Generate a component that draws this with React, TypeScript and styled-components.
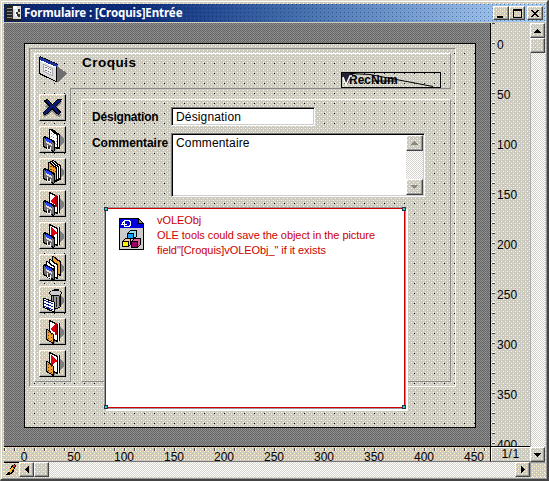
import React from "react";
import styled, { createGlobalStyle, css } from "styled-components";

/* One-pixel dots repeated on a square step, used for dithered fills. */
const dot = (color: string, x: number, y: number, step: number) =>
  `conic-gradient(at 1px 1px, transparent 75%, ${color} 0) ${x}px ${y}px / ${step}px ${step}px`;

const face = [
  dot("#ffffcc", 0, 0, 4),
  dot("#ffffcc", 2, 2, 4),
  dot("#f6cccc", 2, 0, 4),
  "#ccc9be",
].join(", ");
const checker = (a: string, b: string) =>
  `${dot(a, 0, 0, 2)}, ${dot(a, 1, 1, 2)}, ${b}`;

const Global = createGlobalStyle`
  html, body { margin: 0; padding: 0; overflow: hidden; }
  * { box-sizing: border-box; }
  svg { display: block; }
`;

const Window = styled.div`
  width: 549px;
  height: 481px;
  padding: 3px 2px 2px 3px;
  border: 1px solid #dedbc8;
  border-right: 2px solid #444;
  border-bottom: 2px solid #444;
  background: ${face};
  box-shadow: inset 1px 1px #fff, inset -1px -1px #999;
  font-family: "Liberation Sans", Arial, sans-serif;
  color: #000;
  overflow: hidden;
`;

const TitleBar = styled.header`
  display: flex;
  align-items: center;
  width: 541px;
  height: 18px;
  margin-bottom: 1px;
  padding: 0 2px;
  background: ${dot("#00336680", 0, 0, 4)}, ${dot("#6666cc55", 2, 2, 4)},
    linear-gradient(90deg, #0a246a 0%, #0a2a78 25%, #3f6aa8 52%, #a6caf0 95%);
`;

const TitleText = styled.h1`
  flex: 1;
  margin: 0 0 0 2px;
  color: #fff;
  font: bold 11.5px/18px "Noto Sans", sans-serif;
  letter-spacing: -0.08px;
  white-space: nowrap;
`;

const raised = css`
  background: ${face};
  border: 1px solid;
  border-color: #fff #444 #444 #fff;
  box-shadow: inset -1px -1px #999;
`;

const CaptionButton = styled.button<{ $gap?: number }>`
  ${raised}
  display: grid;
  place-items: center;
  width: 16px;
  height: 14px;
  margin: 0 0 0 ${(p) => p.$gap ?? 0}px;
  padding: 0;
`;

const Body = styled.div`
  display: grid;
  grid-template-columns: 486px 40px 15px;
  grid-template-rows: 423px 16px 15px;
`;

const Canvas = styled.main`
  padding: 20px 0 0 20px;
  background: ${dot("#a2a2a2", 1, 1, 4)}, ${checker("#8c8c8c", "#666")};
`;

const Page = styled.div`
  position: relative;
  width: 452px;
  height: 385px;
  padding: 4px;
  border: 1px solid #000;
  background: ${dot("#000", 9, 9, 10)}, ${face};
`;

const Group = styled.section`
  width: 427px;
  height: 339px;
  padding: 4px;
  border: 1px solid;
  border-color: #888 #fff #fff #888;
`;

const FormHeader = styled.div`
  display: flex;
  width: 417px;
  height: 35px;
  padding: 0 9px 0 4px;
  border: solid;
  border-width: 1px 1px 0 1px;
  border-color: #fff #888 #888 #fff;
`;

const Heading = styled.h2`
  margin: 0 auto 0 15px;
  font-size: 13.5px;
  line-height: 17px;
  letter-spacing: 0.5px;
`;

const RecNum = styled.div`
  position: relative;
  width: 100px;
  height: 16px;
  margin-top: 18px;
  padding-left: 7px;
  border: 1px solid #000;
  font-size: 12px;
  font-weight: bold;
  line-height: 14px;

  svg {
    position: absolute;
    left: 0;
    top: 0;
  }
`;

const FormBody = styled.div`
  display: flex;
  height: 294px;
`;

const Toolbar = styled.nav`
  display: flex;
  flex-direction: column;
  gap: 5px;
  width: 37px;
  padding: 6px 0 0 4px;
  border: solid;
  border-width: 0 1px 1px 1px;
  border-color: #888 #888 #888 #fff;
`;

const ToolButton = styled.button`
  flex: none;
  width: 27px;
  height: 27px;
  padding: 0;
  background: ${face};
  border: 1px solid;
  border-color: #fff #000 #000 #fff;
  box-shadow: inset -1px -1px #aaa;
`;

const PanelArea = styled.div`
  width: 380px;
  padding: 10px 0 0 10px;
  border-top: 1px solid #888;
`;

const Panel = styled.div`
  display: grid;
  grid-template-columns: 79px 254px;
  grid-template-rows: 19px 64px;
  row-gap: 7px;
  height: 283px;
  padding: 7px 0 0 10px;
  border: 1px solid;
  border-color: #fff #888 #888 #fff;
`;

const Label = styled.label<{ $tight?: boolean }>`
  font-size: 12px;
  font-weight: bold;
  line-height: 20px;
  letter-spacing: ${(p) => (p.$tight ? -0.2 : -0.05)}px;
  white-space: nowrap;
`;

const Field = styled.div<{ $width: number }>`
  display: flex;
  justify-content: space-between;
  width: ${(p) => p.$width}px;
  border: 1px solid;
  border-color: #777 #fff #fff #777;
  box-shadow: inset 1px 1px #000, inset -1px -1px #ccc;
  background: #fff;
  font-size: 12px;
  letter-spacing: 0.15px;
`;

const FieldText = styled.span`
  padding-left: 4px;
  line-height: 18px;
`;

const FieldScroll = styled.div`
  display: flex;
  flex-direction: column;
  justify-content: space-between;
  width: 17px;
  margin: 1px 1px 1px 0;
  background: ${checker("#fff", "#d8d4d0")};
`;

const ScrollButton = styled.div<{ $w?: number; $h?: number }>`
  ${raised}
  flex: none;
  display: grid;
  place-items: center;
  width: ${(p) => p.$w ?? 15}px;
  height: ${(p) => p.$h ?? 15}px;
`;

const OleObject = styled.div`
  position: absolute;
  left: 80px;
  top: 164px;
  display: flex;
  width: 300px;
  height: 200px;
  padding: 9px 0 0 13px;
  background: #fff;
  border: 1px solid #d00000;
  box-shadow: 0 0 0 1px #999, 2px 2px 0 1px #fff;
`;

const OleText = styled.p`
  width: 240px;
  margin: -5px 0 0 13px;
  color: #cc0000;
  font-size: 11px;
  line-height: 15px;
  letter-spacing: -0.06px;
  white-space: nowrap;
`;

const Handle = styled.i<{ $right?: boolean; $bottom?: boolean }>`
  position: absolute;
  width: 4px;
  height: 4px;
  ${(p) => (p.$right ? "right: -2px;" : "left: -2px;")}
  ${(p) => (p.$bottom ? "bottom: -2px;" : "top: -2px;")}
  background: #234;
  &::after {
    content: "";
    position: absolute;
    left: 1px;
    top: 1px;
    width: 2px;
    height: 2px;
    background: #3cc;
  }
`;

const VRuler = styled.div`
  height: 423px;
  padding-top: 15px;
  overflow: hidden;
  border-left: 1px solid #000;
  background: linear-gradient(#444, #444) 1px 0 / 3px 1px no-repeat, ${face};
  font-size: 12px;
  letter-spacing: 0.1px;
`;

const VMark = styled.div`
  height: 50px;
  padding-left: 6px;
  line-height: 15px;
  background: repeating-linear-gradient(
      transparent 0 4px,
      #fff 4px 5px,
      #444 5px 6px,
      transparent 6px 10px
    )
    1px 0 / 3px 50px no-repeat;
`;

const HRuler = styled.div`
  display: flex;
  border-top: 1px solid #000;
  border-bottom: 1px solid #777;
  background: repeating-linear-gradient(
        90deg,
        #444 0 1px,
        #fff 1px 2px,
        transparent 2px 10px
      )
      0 1px / 100% 3px no-repeat,
    ${face};
  font-size: 12px;
  line-height: 14px;
`;

const HMark = styled.span`
  flex: none;
  width: 50px;
  height: 14px;
  padding-top: 3px;
  text-align: center;
  &:first-child {
    margin-left: -5px;
  }
`;

const Ratio = styled.div`
  border: solid #000;
  border-width: 1px 0 0 1px;
  border-bottom: 1px solid #777;
  background: ${face};
  box-shadow: inset 1px 1px #fff;
  font-size: 12px;
  line-height: 15px;
  text-align: center;
  letter-spacing: 0.5px;
`;

const track = checker("#ffffff", "#d6d3ca");

const VScroll = styled.div`
  grid-column: 3;
  grid-row: 1 / 3;
  display: flex;
  flex-direction: column;
  background: ${track};
  box-shadow: inset 1px 0 #aaa;

  & > :last-child {
    margin-top: auto;
  }
`;

const HScroll = styled.div`
  grid-column: 1 / 3;
  grid-row: 3;
  display: flex;
  background: ${track};

  & > :last-child {
    margin-left: auto;
  }
`;

const PencilCell = styled.div`
  width: 15px;
  height: 15px;
  border-top: 1px solid #000;
  background: ${face};
`;

const Corner = styled.div`
  background: ${face};
  box-shadow: inset 1px 1px #999;
`;

type Dir = "up" | "down" | "left" | "right";
const arrows: Record<Dir, string> = {
  up: "M3 0h1v1h1v1h1v1h1v1H0V3h1V2h1V1h1z",
  down: "M0 0h7v1H6v1H5v1H4v1H3V3H2V2H1V1H0z",
  left: "M4 0v7H3V6H2V5H1V4H0V3h1V2h1V1h1V0z",
  right: "M0 0h1v1h1v1h1v1h1v1H3v1H2v1H1v1H0z",
};

function Arrow({ dir, color = "#000" }: { dir: Dir; color?: string }) {
  const vertical = dir === "up" || dir === "down";
  const w = vertical ? 7 : 4;
  const h = vertical ? 4 : 7;
  return (
    <svg width={w} height={h} viewBox={`0 0 ${w} ${h}`} shapeRendering="crispEdges">
      <path d={arrows[dir]} fill={color} />
    </svg>
  );
}

const Floppy = () => (
  <g>
    <path d="M4 11l2-1 10 5v10l-2 1-10-5z" fill="#000" />
    <path d="M5 12l10 5v8L5 20z" fill="#707070" />
    <path d="M7 12l6 3v5l-6-3z" fill="#ddd" />
    <path d="M7 12l6 3v3l-6-3z" fill="#2244ff" />
    <path d="M8 19l4 2v4l-4-2z" fill="#fff" />
    <path d="M9 20h2v3H9z" fill="#333" />
  </g>
);

const Shadow = () => <path d="M15 25l10-8v-5l-5-4-4 6z" fill="#808080" />;

function Sheet({ x, y, fill = "#fff" }: { x: number; y: number; fill?: string }) {
  return (
    <g transform={`translate(${x} ${y})`}>
      <path d="M.5.5l3 1 1 2 4 2v14l-8-4z" fill={fill} stroke="#000" />
    </g>
  );
}

function RedArrow({ right }: { right?: boolean }) {
  return (
    <g>
      <path d="M10.5 2.5l8 4v17l-8-4z" fill="#fff" stroke="#000" />
      <path d="M19.500 5v18" stroke="#fff" />
      <path d="M20.500 5v18" stroke="#000" />
      <path d={right ? "M12 5l7 6-7 4z" : "M18 5v11l-7-5z"} fill="#e00010" />
      <path d={right ? "M12 14l2-1v3l-2-1z" : "M16 5l2 1v11h-2z"} fill="#b00010" />
    </g>
  );
}

const Folder = () => (
  <g>
    <path d="M7.5 11.5l3 1 1 2 3 2v9l-7-4z" fill="#f0a030" stroke="#000" />
    <path d="M9 14l4 3m-4 0l4 3m-4 0l4 3" stroke="#704000" strokeDasharray="2 1" />
  </g>
);

type Tool =
  | "cancel" | "save" | "saveOrange" | "savePrev" | "saveNext"
  | "saveStack" | "trash" | "prev" | "next";

function ToolIcon({ kind }: { kind: Tool }) {
  return (
    <svg width="25" height="25" viewBox="1 1 25 25" fill="none" shapeRendering="crispEdges">
      {kind === "cancel" && (
        <g>
          <path d="M6 10l5 2 7-5 3-1-1 3-5 4 5 7-2 2-3-1-4-5-4 4-4 2-1-3 5-5-4-3z" fill="#888" transform="translate(2 1)" />
          <path d="M5 6l4-1 4 5 6-5 4 0-1 3-5 4 5 6-2 3-3-1-4-5-4 5-4 1-1-3 6-6-5-4z" fill="#000" />
          <path d="M6 7l3-1 4 5 6-5 3 0-6 6 5 7-2 1-6-6-5 5-3 1v-2l6-6z" fill="#0a1a70" />
        </g>
      )}
      {kind === "save" && (
        <g>
          <Shadow />
          <Sheet x={12} y={3} />
          <Sheet x={10} y={3} />
          <path d="M12 7l6 3m-6 0l6 3m-6 0l6 3m-4 0l4 3" stroke="#999" strokeDasharray="1 1" />
          <Floppy />
        </g>
      )}
      {kind === "saveOrange" && (
        <g>
          <Shadow />
          <Sheet x={13} y={2} />
          <Sheet x={11} y={3} />
          <Sheet x={9} y={4} fill="#f0a030" />
          <path d="M11 8l6 3m-6 0l6 3" stroke="#704000" strokeDasharray="2 1" />
          <Floppy />
        </g>
      )}
      {kind === "savePrev" && <g><Shadow /><RedArrow /><Floppy /></g>}
      {kind === "saveNext" && <g><Shadow /><RedArrow right /><Floppy /></g>}
      {kind === "saveStack" && (
        <g>
          <Shadow />
          <Sheet x={13} y={2} fill="#f0a030" />
          <Sheet x={10} y={5} />
          <Sheet x={7} y={7} />
          <Floppy />
        </g>
      )}
      {kind === "trash" && (
        <g>
          <Shadow />
          <path d="M12 8h10l-1 13-4 2-4-2z" fill="#999" stroke="#000" />
          <path d="M14 10v10m3-9v10m3-11v10" stroke="#222" />
          <ellipse cx="16.500" cy="7" rx="6" ry="2.500" fill="#ccc" stroke="#000" />
          <path d="M14 5l2-2h3v2" stroke="#000" />
          <path d="M4 12l11 4v10L4 21z" fill="#fff" stroke="#000" />
          <path d="M5 14l9 4m-9-1l9 4m-9-1l9 4" stroke="#102090" />
        </g>
      )}
      {kind === "prev" && <g><Shadow /><RedArrow /><Folder /></g>}
      {kind === "next" && <g><Shadow /><RedArrow right /><Folder /></g>}
    </svg>
  );
}

const FormIcon = () => (
  <svg width="28" height="30" viewBox="0 -1 28 30" fill="none" shapeRendering="crispEdges">
    <path d="M19 12l9 6-9 9z" fill="#707070" />
    <path d="M0 2l1-1 18 8v18h-2L0 19z" fill="#000" />
    <path d="M1 4l16 7v15L1 18z" fill="#ddd" />
    <path d="M1 2l17 7v3L1 5z" fill="#17309a" />
    <path d="M1 5.500l16 7" stroke="#fff" />
    <path d="M4.500 9.500l9 4v7l-9-4z" fill="#eee" stroke="#aaa" />
    <path d="M6 12l6 3m-6 0l6 3" stroke="#777" strokeDasharray="2 1" />
    <path d="M18.500 10v17" stroke="#777" />
  </svg>
);

const AppIcon = () => (
  <svg width="16" height="16" viewBox="0 0 16 16" shapeRendering="crispEdges">
    <path d="M0 0h16v16H0z" fill="#222" />
    <path d="M7 1h8v13H7z" fill="#ddd" />
    <path d="M7 1h4v3H7zM9 5h2v6H9z" fill="#fff" />
    <path d="M1 3h5v1H1zM1 6h5v1H1zM1 9h5v1H1zM1 12h5v1H1z" fill="#888" />
    <path d="M6 2v12h1V2zM12 4v3h2V4zM10 7h2v2h-2zM11 9h3v3h-2v-1h-1z" fill="#333" />
  </svg>
);

const OleIcon = () => (
  <svg width="25" height="32" viewBox="0 0 25 32" fill="none" shapeRendering="crispEdges">
    <path d="M.5.5h19l5 5v26H.5z" fill="#ccc" stroke="#000" />
    <path d="M1 1h18v5h5v4H1z" fill="#0000dd" />
    <path d="M19.500.5v5h5z" fill="#888" stroke="#000" />
    <path d="M2 6.500h6M5.500 2.500v6M5.500 2.500l-3 4M5 8.500h4c3 0 4-6 0-6H6" stroke="#fff" />
    <path d="M8.500 15.500l3-3h6v6l-3 2h-6z" fill="#88e8f0" stroke="#000" />
    <path d="M8.500 15.500h6v5h-6z" fill="#18a0f8" stroke="#000" />
    <path d="M3.500 23.500l3-3h5v6l-2 2h-6z" fill="#ffc090" stroke="#000" />
    <path d="M3.500 23.500h6v5h-6z" fill="#ffee00" stroke="#000" />
    <path d="M12.500 23.500l3-3h6v6l-3 3h-6z" fill="#e060a0" stroke="#000" />
    <path d="M12.500 23.500h6v6h-6z" fill="#990066" stroke="#000" />
  </svg>
);

const Pencil = () => (
  <svg width="15" height="14" viewBox="0 0 15 14" shapeRendering="crispEdges">
    <path d="M8 2l3-1 1 2-3 7-4 2H2v-1l3-2z" fill="#000" />
    <path d="M8 4l2 1-3 5-2-1z" fill="#ffb020" />
    <path d="M9 2h2v2H9z" fill="#e03020" />
  </svg>
);

const tools: Tool[] = [
  "cancel", "save", "saveOrange", "savePrev", "saveNext",
  "saveStack", "trash", "prev", "next",
];
const vMarks = [0, 50, 100, 150, 200, 250, 300, 350, 400];
const hMarks = [...vMarks, 450];

export default function App() {
  return (
    <Window>
      <Global />
      <TitleBar>
        <AppIcon />
        <TitleText>Formulaire : [Croquis]Entrée</TitleText>
        <CaptionButton aria-label="Réduire">
          <svg width="10" height="9" shapeRendering="crispEdges">
            <path d="M1 7h6v2H1z" />
          </svg>
        </CaptionButton>
        <CaptionButton aria-label="Agrandir">
          <svg width="9" height="9" shapeRendering="crispEdges">
            <path d="M0 0h9v9H0zM1 2v6h7V2z" fillRule="evenodd" />
          </svg>
        </CaptionButton>
        <CaptionButton $gap={2} aria-label="Fermer">
          <svg width="8" height="7" shapeRendering="crispEdges">
            <path d="M0 0h2v1h1v1h2V1h1V0h2v1H7v1H6v1H5v1h1v1h1v1h1v1H6V6H5V5H3v1H2v1H0V6h1V5h1V4h1V3H2V2H1V1H0z" />
          </svg>
        </CaptionButton>
      </TitleBar>
      <Body>
        <Canvas>
          <Page>
            <Group>
              <FormHeader>
                <FormIcon />
                <Heading>Croquis</Heading>
                <RecNum>
                  RecNum
                  <svg width="98" height="14" viewBox="0 0 98 14">
                    <path d="M0 0h12L5 12 0 4z" fill="#223" />
                    <path d="M1 4l3 8 4-9 2 0" stroke="#fff" strokeWidth="1.500" fill="none" />
                    <path d="M8 .5l20 1L91 13.500M30 8h24" stroke="#000" fill="none" />
                  </svg>
                </RecNum>
              </FormHeader>
              <FormBody>
                <Toolbar>
                  {tools.map((kind) => (
                    <ToolButton key={kind}>
                      <ToolIcon kind={kind} />
                    </ToolButton>
                  ))}
                </Toolbar>
                <PanelArea>
                  <Panel>
                    <Label $tight>Désignation</Label>
                    <Field $width={144}>
                      <FieldText>Désignation</FieldText>
                    </Field>
                    <Label>Commentaire</Label>
                    <Field $width={254}>
                      <FieldText>Commentaire</FieldText>
                      <FieldScroll>
                        <ScrollButton $w={17} $h={16}>
                          <Arrow dir="up" color="#888" />
                        </ScrollButton>
                        <ScrollButton $w={17} $h={16}>
                          <Arrow dir="down" color="#888" />
                        </ScrollButton>
                      </FieldScroll>
                    </Field>
                  </Panel>
                </PanelArea>
              </FormBody>
            </Group>
            <OleObject>
              <OleIcon />
              <OleText>
                vOLEObj
                <br />
                OLE tools could save the object in the picture
                <br />
                field"[Croquis]vOLEObj_" if it exists
              </OleText>
              <Handle />
              <Handle $right />
              <Handle $bottom />
              <Handle $right $bottom />
            </OleObject>
          </Page>
        </Canvas>
        <VRuler>
          {vMarks.map((n) => (
            <VMark key={n}>{n}</VMark>
          ))}
        </VRuler>
        <HRuler>
          {hMarks.map((n) => (
            <HMark key={n}>{n}</HMark>
          ))}
        </HRuler>
        <Ratio>1/1</Ratio>
        <VScroll>
          <ScrollButton>
            <Arrow dir="up" />
          </ScrollButton>
          <ScrollButton />
          <ScrollButton>
            <Arrow dir="down" />
          </ScrollButton>
        </VScroll>
        <HScroll>
          <PencilCell>
            <Pencil />
          </PencilCell>
          <ScrollButton>
            <Arrow dir="left" />
          </ScrollButton>
          <ScrollButton />
          <ScrollButton>
            <Arrow dir="right" />
          </ScrollButton>
        </HScroll>
        <Corner />
      </Body>
    </Window>
  );
}
